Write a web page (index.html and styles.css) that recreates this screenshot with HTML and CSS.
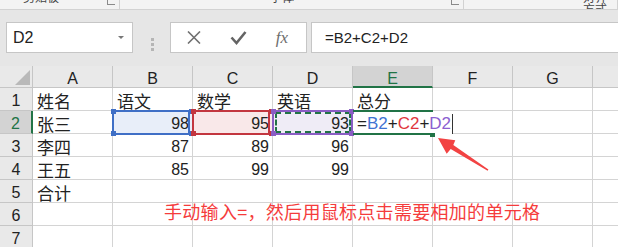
FILE: index.html
```html
<!DOCTYPE html><html lang="zh-CN"><head>
  <meta charset="UTF-8">
  <meta name="viewport" content="width=device-width, initial-scale=1.0">
  <title>Excel 公式输入</title>
  <link rel="stylesheet" href="styles.css">
</head>
<body>
  <div class="ribbon">
    <div class="group g1"><span class="label">剪贴板</span><span class="launch"></span></div>
    <div class="group g2"><span class="label">字体</span><span class="launch"></span></div>
    <div class="group g3"><span class="label">对齐方式</span></div>
  </div>

  <div class="fbar">
    <div class="namebox"><span>D2</span><span class="caret"></span></div>
    <div class="grip"><i></i><i></i><i></i></div>
    <div class="btns">
      <span class="btn">
        <svg width="14" height="13" viewBox="0 0 14 13"><path d="M1 0.5 L13 12.5 M13 0.5 L1 12.5" stroke="#707070" stroke-width="1.6" fill="none"/></svg>
      </span>
      <span class="btn">
        <svg width="17" height="14" viewBox="0 0 17 14"><path d="M1.5 6.5 L6.5 12 L15.5 1" stroke="#646464" stroke-width="2.6" fill="none" stroke-linejoin="miter"/></svg>
      </span>
      <span class="btn fx">fx</span>
    </div>
    <div class="formula">=B2+C2+D2</div>
  </div>

  <div class="sheet">
    <div class="hd corner"><svg width="33" height="22" viewBox="0 0 33 22"><polygon points="15,19 30,19 30,4" fill="#b9b9b9"/></svg></div>
    <div class="hd">A</div>
    <div class="hd">B</div>
    <div class="hd">C</div>
    <div class="hd">D</div>
    <div class="hd sel">E</div>
    <div class="hd">F</div>
    <div class="hd">G</div>
    <div class="hd">H</div>

    <div class="rh">1</div>
    <div class="c zh">姓名</div>
    <div class="c zh">语文</div>
    <div class="c zh">数学</div>
    <div class="c zh">英语</div>
    <div class="c zh">总分</div>
    <div class="c"></div>
    <div class="c"></div>
    <div class="c"></div>

    <div class="rh sel">2</div>
    <div class="c zh">张三</div>
    <div class="c num ref ref-b">98<i class="h tl"></i><i class="h tr"></i><i class="h bl"></i><i class="h br"></i></div>
    <div class="c num ref ref-c">95<i class="h tl"></i><i class="h tr"></i><i class="h bl"></i><i class="h br"></i></div>
    <div class="c num ref ref-d">93<i class="h tl"></i><i class="h tr"></i><i class="h bl"></i><i class="h br"></i></div>
    <div class="c active"><span class="edit">=<span class="rb">B2</span>+<span class="rc">C2</span>+<span class="rd">D2</span></span><i class="fill"></i></div>
    <div class="c"></div>
    <div class="c"></div>
    <div class="c"></div>

    <div class="rh">3</div>
    <div class="c zh">李四</div>
    <div class="c num">87</div>
    <div class="c num">89</div>
    <div class="c num">96</div>
    <div class="c"></div>
    <div class="c"></div>
    <div class="c"></div>
    <div class="c"></div>

    <div class="rh">4</div>
    <div class="c zh">王五</div>
    <div class="c num">85</div>
    <div class="c num">99</div>
    <div class="c num">99</div>
    <div class="c"></div>
    <div class="c"></div>
    <div class="c"></div>
    <div class="c"></div>

    <div class="rh">5</div>
    <div class="c zh">合计</div>
    <div class="c"></div>
    <div class="c"></div>
    <div class="c"></div>
    <div class="c"></div>
    <div class="c"></div>
    <div class="c"></div>
    <div class="c"></div>

    <div class="rh">6</div>
    <div class="c"></div>
    <div class="c"></div>
    <div class="c"></div>
    <div class="c"></div>
    <div class="c"></div>
    <div class="c"></div>
    <div class="c"></div>
    <div class="c"></div>

    <div class="rh">7</div>
    <div class="c"></div>
    <div class="c"></div>
    <div class="c"></div>
    <div class="c"></div>
    <div class="c"></div>
    <div class="c"></div>
    <div class="c"></div>
    <div class="c"></div>

    <!-- annotation drawn over the sheet -->
    <div class="note">手动输入=，然后用鼠标点击需要相加的单元格</div>
    <svg class="arrow" width="64" height="40" viewBox="0 0 64 40">
      <polygon points="8,2 16.7,17.7 20.7,13.1 57.6,34.8 58.4,33.4 23.3,8.9 25.3,4.3" fill="#f24343"/>
    </svg>
  </div>
</body></html>
```

FILE: styles.css
```css
:root {
  --grid: #d4d4d4;
  --head: #e9e9e9;
  --head-line: #c6c6c6;
  --green: #217346;
  --blue: #3f6fc6;
  --red: #c3363f;
  --purple: #8a5ec4;
}

* {
  box-sizing: border-box;
  margin: 0;
  padding: 0;
}

body {
  width: 618px;
  height: 247px;
  overflow: hidden;
  background: #e6e6e6;
  color: #222;
  font-family: 'Liberation Sans', 'Noto Sans CJK SC', sans-serif;
}

/* cut-off ribbon at the top */
.ribbon {
  height: 10px;
  display: flex;
  background: #f3f3f3;
  border-bottom: 1px solid #d2d2d2;
  overflow: hidden;
}

.group {
  display: flex;
  height: 9px;
  border-right: 1px solid #d2d2d2;
  font: 12px/12px 'Noto Sans CJK SC', sans-serif;
  color: #444;
}

.group .label {
  margin-top: -9px;
}

.group .launch {
  margin-left: auto;
  margin-right: 4px;
  width: 8px;
  height: 5px;
  border-left: 1px solid #8a8a8a;
  border-bottom: 1px solid #8a8a8a;
}

.g1 { width: 120px; padding-left: 23px; }
.g2 { width: 344px; padding-left: 150px; }
.g3 { flex: 1; padding-left: 119px; }

/* formula bar */
.fbar {
  height: 56px;
  display: flex;
  align-items: flex-start;
  padding: 12px 0 0 6px;
}

.namebox {
  width: 127px;
  height: 31px;
  background: #fff;
  border: 1px solid #c6c6c6;
  display: flex;
  align-items: center;
  justify-content: space-between;
  padding: 0 8px 0 6px;
  font-size: 16px;
}

.namebox .caret {
  width: 0;
  height: 0;
  border-left: 3px solid transparent;
  border-right: 3px solid transparent;
  border-top: 3px solid #777;
}

.grip {
  align-self: center;
  margin-left: 18px;
  display: flex;
  flex-direction: column;
  gap: 2px;
}

.grip i {
  width: 3px;
  height: 3px;
  background: #b5b5b5;
}

.btns {
  margin-left: 16px;
  width: 137px;
  height: 31px;
  background: #fff;
  border: 1px solid #c6c6c6;
  display: flex;
  align-items: center;
  padding-left: 1px;
}

.btn {
  width: 44px;
  display: flex;
  justify-content: center;
  align-items: center;
}

.btn.fx {
  font: italic 17px 'Liberation Serif', serif;
  color: #6d6d6d;
}

.formula {
  flex: 1;
  margin-left: 4px;
  margin-right: -10px;
  height: 31px;
  background: #fff;
  border: 1px solid #c6c6c6;
  padding-left: 13px;
  font-size: 15px;
  line-height: 29px;
}

/* sheet grid */
.sheet {
  position: relative;
  display: grid;
  grid-template-columns: 33px repeat(8, 80px);
  grid-template-rows: 22px;
  grid-auto-rows: 23px;
  background: #fff;
}

.hd, .rh {
  background: var(--head);
  border-right: 1px solid var(--head-line);
  border-bottom: 1px solid var(--head-line);
  text-align: center;
  font-size: 16px;
  line-height: 20px;
  color: #222;
  padding-top: 3px;
}

.hd.corner {
  padding: 0;
  line-height: 0;
}

.hd.sel {
  background: #d3d3d3;
  border-bottom: 2px solid var(--green);
  color: var(--green);
}

.rh.sel {
  background: #d3d3d3;
  border-right: 2px solid var(--green);
  color: var(--green);
}

.c {
  border-right: 1px solid var(--grid);
  border-bottom: 1px solid var(--grid);
  padding: 3px 4px 0;
  font-size: 16px;
  line-height: 20px;
  white-space: nowrap;
}

.zh {
  font-family: 'Noto Sans CJK SC', sans-serif;
  font-size: 17px;
}

.num {
  text-align: right;
  padding-right: 3px;
}

/* coloured reference boxes */
.ref {
  position: relative;
  z-index: 1;
}

.ref::before {
  content: "";
  position: absolute;
  top: -1px;
  left: -1px;
  right: 2px;
  bottom: -2px;
  border: 2px solid var(--rc);
}

.ref-b { --rc: var(--blue); background: #e8eef9; }
.ref-c { --rc: var(--red); background: #f9e8e9; }
.ref-d { --rc: var(--purple); background: #efecf6; }

.ref-d::before { right: -1px; }

.ref-d::after {
  content: "";
  position: absolute;
  top: 1px;
  left: 2px;
  right: 1px;
  bottom: 0;
  border: 2px dashed var(--green);
}

.h {
  position: absolute;
  width: 5px;
  height: 5px;
  background: var(--rc);
  z-index: 1;
}

.h.tl { left: -2px; top: -2px; }
.h.tr { right: -2px; top: -2px; }
.h.bl { left: -2px; bottom: -3px; }
.h.br { right: -2px; bottom: -3px; }

/* cell being edited */
.active {
  position: relative;
  z-index: 2;
  border-right-color: #fff;
  font-size: 17px;
}

.active::after {
  content: "";
  position: absolute;
  top: -1px;
  left: 0;
  right: -1px;
  bottom: -2px;
  border-top: 2px solid var(--green);
  border-bottom: 2px solid var(--green);
}

.edit {
  display: inline-block;
  background: #fff;
  padding-right: 1px;
  border-right: 1px solid #333;
}

.rb { color: #3f73d2; }
.rc { color: #e0353d; }
.rd { color: #8c60d0; }

.fill {
  position: absolute;
  right: -3px;
  bottom: -4px;
  width: 5px;
  height: 4px;
  background: var(--green);
  z-index: 1;
}

/* annotation */
.note {
  position: absolute;
  left: 164px;
  top: 136px;
  z-index: 3;
  font: 18px/18px 'Noto Sans CJK SC', sans-serif;
  letter-spacing: 0.3px;
  color: #f53c3c;
  white-space: nowrap;
}

.arrow {
  position: absolute;
  left: 430px;
  top: 70px;
  z-index: 3;
}
```
